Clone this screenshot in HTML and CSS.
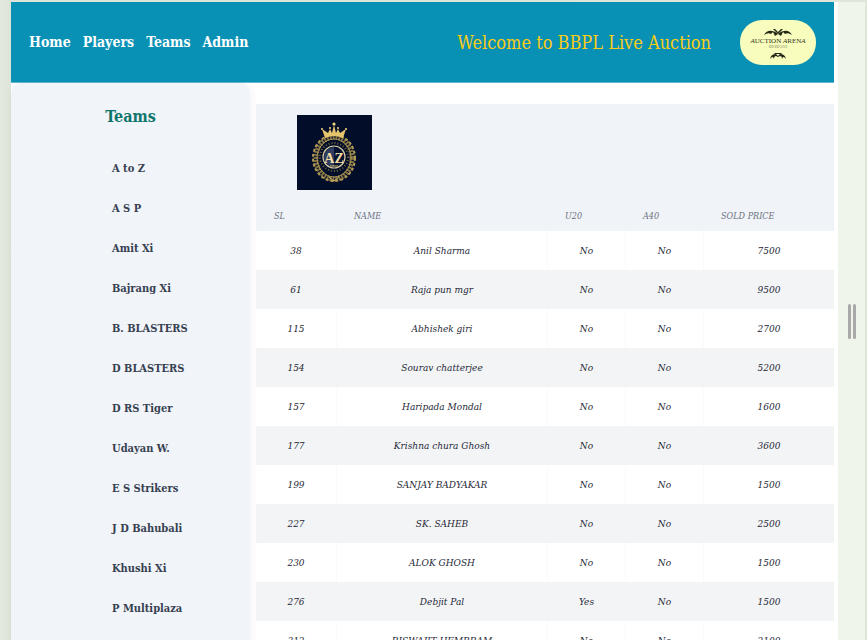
FILE: index.html
```
<!DOCTYPE html>
<html lang="en">
<head>
<meta charset="utf-8">
<meta name="viewport" content="width=device-width, initial-scale=1">
<title>BBPL Live Auction</title>
<link rel="stylesheet" href="styles.css">
</head>
<body>
<div class="frame">
  <div class="page">
    <header class="topbar">
      <nav class="nav">
        <a href="#">Home</a>
        <a href="#">Players</a>
        <a href="#">Teams</a>
        <a href="#">Admin</a>
      </nav>
      <p class="welcome">Welcome to BBPL Live Auction</p>
      <svg class="brand" viewBox="0 0 76 45" role="img" aria-label="Auction Arena">
        <rect width="76" height="45" rx="22" fill="#f8fdbd"/>
        <g fill="#252817">
          <path d="M24 15Q27 10 32 11Q35 11 38 14Q41 11 44 11Q49 10 52 15Q48 12 45 14L43 12L41 16L38 14L35 16L33 12L31 14Q28 12 24 15Z"/>
          <path d="M33 9L35 9L38 12L41 9L43 9L38 14Z"/>
          <path d="M30 39Q31 34 36 34L38 36L40 34Q45 34 46 39Q43 35 42 39Q42 36 40 36L38 37L36 36Q34 36 34 39Q33 35 30 39ZM34 33H42L41 34H35Z"/>
        </g>
        <g class="brand-text" text-anchor="middle">
          <text x="38" y="23" font-size="7"><tspan font-style="italic">A</tspan>UCTION <tspan font-style="italic">A</tspan>REN<tspan font-style="italic">A</tspan></text>
          <text x="38" y="28" font-size="3" opacity=".65">BID BID LIVE</text>
        </g>
      </svg>
    </header>
    <div class="content">
      <aside class="sidebar">
        <h2>Teams</h2>
        <ul>
          <li><a href="#">A to Z</a></li>
          <li><a href="#">A S P</a></li>
          <li><a href="#">Amit Xi</a></li>
          <li><a href="#">Bajrang Xi</a></li>
          <li><a href="#">B. BLASTERS</a></li>
          <li><a href="#">D BLASTERS</a></li>
          <li><a href="#">D RS Tiger</a></li>
          <li><a href="#">Udayan W.</a></li>
          <li><a href="#">E S Strikers</a></li>
          <li><a href="#">J D Bahubali</a></li>
          <li><a href="#">Khushi Xi</a></li>
          <li><a href="#">P Multiplaza</a></li>
        </ul>
      </aside>
      <main class="roster">
        <div class="crest-bar">
          <svg class="crest" viewBox="0 0 75 75" role="img" aria-label="A to Z team crest">
            <rect width="75" height="75" fill="#020d29"/>
            <g fill="none" stroke="#b39a55">
              <ellipse cx="37" cy="43" rx="18" ry="21" stroke-width="5" stroke-dasharray="2 1" stroke="#7c6d43"/>
              <ellipse cx="37" cy="43" rx="21" ry="23" stroke-width="2" stroke-dasharray="3 2"/>
              <ellipse cx="37" cy="43" rx="17" ry="19"/>
              <circle cx="37" cy="42" r="14" stroke-width="2" stroke-dasharray="1 2" stroke="#75673f"/>
            </g>
            <circle cx="37" cy="42" r="11" fill="#071331" stroke="#d8cfa7" stroke-width="1.2"/>
            <path d="M37 32A10 10 0 0 0 37 52Z" fill="#303d61"/>
            <path d="M28 23L25 14L31 18L33 14L35 18L37 10L39 18L41 14L43 18L49 14L46 23Q37 19 28 23Z" fill="#e5c46d"/>
            <g fill="#f2d681"><circle cx="25" cy="14" r="1"/><circle cx="33" cy="13" r="1"/><circle cx="37" cy="9" r="1.6"/><circle cx="41" cy="13" r="1"/><circle cx="49" cy="14" r="1"/></g>
            <path d="M33 51H41M32 62L37 66L42 62" fill="none" stroke="#d1b66b"/>
            <text class="crest-text" x="37" y="48" font-size="14" text-anchor="middle">AZ</text>
          </svg>
        </div>
        <table>
          <colgroup><col class="c-sl"><col><col class="c-flag"><col class="c-flag"><col class="c-price"></colgroup>
          <thead>
            <tr><th scope="col">SL</th><th scope="col">NAME</th><th scope="col">U20</th><th scope="col">A40</th><th scope="col">SOLD PRICE</th></tr>
          </thead>
          <tbody>
            <tr><td>38</td><td>Anil Sharma</td><td>No</td><td>No</td><td>7500</td></tr>
            <tr><td>61</td><td>Raja pun mgr</td><td>No</td><td>No</td><td>9500</td></tr>
            <tr><td>115</td><td>Abhishek giri</td><td>No</td><td>No</td><td>2700</td></tr>
            <tr><td>154</td><td>Sourav chatterjee</td><td>No</td><td>No</td><td>5200</td></tr>
            <tr><td>157</td><td>Haripada Mondal</td><td>No</td><td>No</td><td>1600</td></tr>
            <tr><td>177</td><td>Krishna chura Ghosh</td><td>No</td><td>No</td><td>3600</td></tr>
            <tr><td>199</td><td>SANJAY BADYAKAR</td><td>No</td><td>No</td><td>1500</td></tr>
            <tr><td>227</td><td>SK. SAHEB</td><td>No</td><td>No</td><td>2500</td></tr>
            <tr><td>230</td><td>ALOK GHOSH</td><td>No</td><td>No</td><td>1500</td></tr>
            <tr><td>276</td><td>Debjit Pal</td><td>Yes</td><td>No</td><td>1500</td></tr>
            <tr><td>312</td><td>BISWAJIT HEMBRAM</td><td>No</td><td>No</td><td>2100</td></tr>
          </tbody>
        </table>
      </main>
    </div>
  </div>
  <div class="resizer"><span></span><span></span></div>
</div>
</body>
</html>
```
FILE: styles.css
```
* { box-sizing: border-box; }

body {
  margin: 0;
  background: linear-gradient(90deg, #e3e9de, #dce4d9 11px, #dfe6d9 100%);
  font-family: "DejaVu Serif Condensed", Georgia, "Liberation Serif", serif;
  color: #1f2937;
}

.frame {
  display: flex;
  height: 100vh;
  padding: 2px 2px 0 11px;
  overflow: hidden;
}

.page {
  flex: 1;
  min-width: 0;
  padding-right: 4px;
  background: #fff;
}

.topbar {
  display: flex;
  align-items: center;
  height: 81px;
  padding: 0 18px;
  background: #0891b5;
  border-bottom: 1px solid #5fb8cf;
}

.nav {
  display: flex;
  gap: 12px;
  font-size: 14px;
  font-weight: 700;
}

.nav a { color: #fff; text-decoration: none; }

.welcome {
  margin: 0 29px 0 auto;
  font-size: 18px;
  color: #facc15;
}

.brand { width: 76px; height: 45px; }
.brand-text { font-family: "Liberation Serif", serif; fill: #343721; }

.content { display: flex; align-items: flex-start; gap: 6px; }

.sidebar {
  width: 239px;
  min-height: 100vh;
  padding-top: 22px;
  background: #f1f4f9;
  border-radius: 10px;
  box-shadow: 2px 2px 8px #0000000d;
}

.sidebar h2 {
  margin: 0 0 30px;
  font-size: 16px;
  line-height: 24px;
  text-align: center;
  color: #0f766e;
}

.sidebar ul { margin: 0; padding: 0 0 0 101px; list-style: none; }

.sidebar a {
  display: block;
  font-size: 11px;
  font-weight: 700;
  line-height: 20px;
  padding-bottom: 20px;
  color: #374151;
  text-decoration: none;
}

.roster { flex: 1; min-width: 0; margin-top: 21px; }

.crest-bar { padding: 11px 41px 10px; background: #f0f3f8; }
.crest { display: block; width: 75px; height: 75px; }
.crest-text { font-family: "Liberation Serif", serif; font-weight: 700; fill: #f0dda2; }

table {
  width: 100%;
  table-layout: fixed;
  border-spacing: 0;
  font-style: italic;
}

.c-sl { width: 80px; }
.c-flag { width: 78px; }
.c-price { width: 131px; }

th {
  height: 31px;
  padding: 0 18px;
  font-size: 9px;
  font-weight: 400;
  text-align: left;
  white-space: nowrap;
  color: #6b7280;
  background: #f0f3f8;
}

td {
  height: 39px;
  padding: 0;
  font-size: 10px;
  text-align: center;
}

td + td { border-left: 1px solid #fafafa; }

tbody tr:nth-child(even) { background: #f3f4f6; }
tbody tr:nth-child(even) td { border-color: #f3f4f6; }

.resizer {
  display: flex;
  justify-content: center;
  align-items: center;
  gap: 2px;
  width: 27px;
  background: #eff5ea;
}

.resizer span { width: 3px; height: 35px; border-radius: 2px; background: #a9a9a9; }
```
